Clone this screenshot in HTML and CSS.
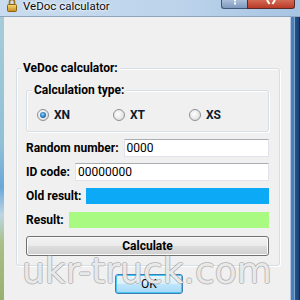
FILE: index.html
```html
<!DOCTYPE html>
<html>
<head>
<meta charset="utf-8">
<link rel="stylesheet" href="styles.css">
</head>
<body>
<div class="window">
  <div class="titlebar">
    <svg class="lock" width="10" height="12" viewBox="0 0 10 12">
      <defs>
        <linearGradient id="lg" x1="0" y1="0" x2="0" y2="1">
          <stop offset="0" stop-color="#f8dc78"/>
          <stop offset="1" stop-color="#c98a1c"/>
        </linearGradient>
      </defs>
      <path d="M2.5 6 V2 a2.5 2.5 0 0 1 5 0 V6" fill="none" stroke="#9c7418" stroke-width="1.6"/>
      <rect x="0.5" y="4.5" width="9" height="7" rx="1" fill="url(#lg)" stroke="#8a6212"/>
    </svg>
    <span class="title">VeDoc calculator</span>
    <div class="caption">
      <span class="cap-btn help"><svg width="6" height="5" viewBox="0 0 6 5"><rect x="2" y="0" width="2" height="1.5" fill="#fff"/><rect x="2" y="2.5" width="2" height="2" fill="#fff"/></svg></span>
      <span class="cap-btn close"><svg width="10" height="5" viewBox="0 0 10 5"><path d="M1 0 L3.5 4 M9 0 L6.5 4" stroke="#fff" stroke-width="2" fill="none"/></svg></span>
    </div>
  </div>
  <div class="body">
    <div class="frame-left"></div>
    <div class="client">
      <div class="group outer">
        <span class="group-title">VeDoc calculator:</span>
        <div class="group inner">
          <span class="group-title">Calculation type:</span>
          <div class="radios">
            <label class="radio"><span class="dot checked"></span>XN</label>
            <label class="radio"><span class="dot"></span>XT</label>
            <label class="radio"><span class="dot"></span>XS</label>
          </div>
        </div>
        <div class="rows">
          <div class="row"><span class="lbl">Random number:</span><span class="field">0000</span></div>
          <div class="row"><span class="lbl">ID code:</span><span class="field">00000000</span></div>
          <div class="row"><span class="lbl">Old result:</span><span class="field color blue"></span></div>
          <div class="row"><span class="lbl">Result:</span><span class="field color green"></span></div>
        </div>
        <button class="btn calc">Calculate</button>
      </div>
      <button class="btn ok">OK</button>
    </div>
    <div class="frame-right"></div>
  </div>
  <div class="watermark">ukr-truck.com</div>
</div>
</body>
</html>
```
FILE: styles.css
```css
html, body {
  margin: 0;
  padding: 0;
}
.window {
  width: 300px;
  height: 300px;
  position: relative;
  overflow: hidden;
  display: flex;
  flex-direction: column;
  font-family: Roboto, "Liberation Sans", sans-serif;
  font-size: 12px;
  color: #000;
}
.titlebar {
  height: 16px;
  flex: none;
  display: flex;
  align-items: flex-start;
  border-bottom: 1px solid #8fa5bd;
  background: linear-gradient(to right, #c9dcef 0%, #bcd3ea 60%, #a7c4e3 100%);
}
.lock {
  margin-left: 7px;
  display: block;
}
.title {
  margin-left: 6px;
  font-size: 11.5px;
  line-height: 12px;
  color: #0a0a0a;
  text-shadow: 0 0 4px #fff, 0 0 2px #fff;
}
.caption {
  margin-left: auto;
  margin-right: 5px;
  display: flex;
}
.cap-btn {
  height: 8px;
  display: flex;
  justify-content: center;
  align-items: flex-start;
  border: 1px solid #3f5877;
  border-top: none;
}
.cap-btn svg {
  display: block;
}
.help {
  width: 25px;
  border-radius: 0 0 0 3px;
  background: linear-gradient(#aabfd9, #7e99bd);
  border-right: none;
}
.close {
  width: 46px;
  border-radius: 0 0 3px 0;
  background: linear-gradient(#d46a55, #b93b27);
  border-color: #5a2a28;
}
.body {
  flex: 1;
  display: flex;
  min-height: 0;
}
.frame-left {
  width: 4px;
  flex: none;
  background: linear-gradient(#a6ccd8 0%, #8fc0d6 45%, #6aa6d8 60%, #bcd6e2 70%, #a9bf86 80%, #97b06e 100%);
}
.frame-right {
  width: 10px;
  flex: none;
  background: linear-gradient(to right, #b5c8dc 0, #b5c8dc 1px, #4b80ba 1px, #4b80ba 4px, #7fa6cf 4px, #7fa6cf 5px, #24528a 5px, #1b4377 9px, #0e2a4c 9px);
}
.client {
  flex: 1;
  min-width: 0;
  background: #f0f0f0;
  padding: 51px 10px 0 12px;
  display: flex;
  flex-direction: column;
  align-items: flex-start;
}
.group {
  position: relative;
  border: 1px solid #d5dfe5;
  border-radius: 3px;
  box-shadow: inset 1px 1px 0 #fff, 1px 1px 0 #fff;
}
.group-title {
  position: absolute;
  top: -8px;
  padding: 0 2px;
  background: #f0f0f0;
  font-weight: bold;
  line-height: 14px;
  white-space: nowrap;
}
.outer {
  align-self: stretch;
  padding: 21px 10px 9px 9px;
}
.outer > .group-title {
  left: 4px;
}
.inner {
  padding: 17px 10px 9px 10px;
}
.inner > .group-title {
  left: 5px;
}
.radios {
  display: grid;
  grid-template-columns: 76px 76px auto;
  height: 14px;
}
.radio {
  display: flex;
  align-items: center;
  font-weight: bold;
  color: #0d1a2c;
  line-height: 14px;
}
.dot {
  width: 10px;
  height: 10px;
  border-radius: 50%;
  border: 1px solid #8d8f91;
  background: radial-gradient(circle at 40% 40%, #ffffff 0%, #e6e6e6 60%, #d0d0d0 100%);
  margin-right: 5px;
  display: flex;
  align-items: center;
  justify-content: center;
  flex: none;
}
.dot.checked::after {
  content: "";
  width: 6px;
  height: 6px;
  border-radius: 50%;
  background: radial-gradient(circle at 45% 40%, #9fd6f7 0%, #2f86c8 45%, #14467e 100%);
}
.rows {
  margin-top: 7px;
  display: flex;
  flex-direction: column;
  gap: 6px;
}
.row {
  display: flex;
  align-items: center;
  height: 18px;
}
.lbl {
  font-weight: bold;
  margin-right: 5px;
  white-space: nowrap;
}
.field {
  flex: 1;
  min-width: 0;
  height: 16px;
  background: #fff;
  border: 1px solid #e2e3ea;
  border-top-color: #abadb3;
  padding-left: 2px;
  line-height: 16px;
  font-size: 12px;
}
.field.color {
  height: 16px;
  border: none;
  padding: 0;
}
.blue {
  background: #0ca9f6;
}
.green {
  background: #a8fb80;
}
.btn {
  font-family: inherit;
  font-size: 12px;
  color: #000;
  border: 1px solid #707070;
  border-radius: 3px;
  background: linear-gradient(#f2f2f2 0%, #ebebeb 48%, #dddddd 52%, #cfcfcf 100%);
  box-shadow: inset 0 0 0 1px #fcfcfc;
  padding: 0;
}
.calc {
  display: block;
  width: 100%;
  height: 20px;
  margin-top: 7px;
  font-weight: bold;
}
.ok {
  width: 68px;
  height: 20px;
  margin-top: 8px;
  margin-left: 99px;
  border-color: #3c7fb1;
  box-shadow: inset 0 0 0 1px #48c6f8;
  background: linear-gradient(#eaf6fd 0%, #d9f0fc 48%, #bee6fd 52%, #a7d9f5 100%);
}
.watermark {
  position: absolute;
  left: 22px;
  top: 253px;
  font-family: "DejaVu Sans", Verdana, sans-serif;
  font-size: 36px;
  line-height: 36px;
  color: rgba(255, 255, 255, 0.8);
  text-shadow: 1px 0 0 rgba(150,150,150,0.55), -1px 0 0 rgba(150,150,150,0.55), 0 1px 0 rgba(150,150,150,0.55), 0 -1px 0 rgba(150,150,150,0.55);
  white-space: nowrap;
  pointer-events: none;
}
```
